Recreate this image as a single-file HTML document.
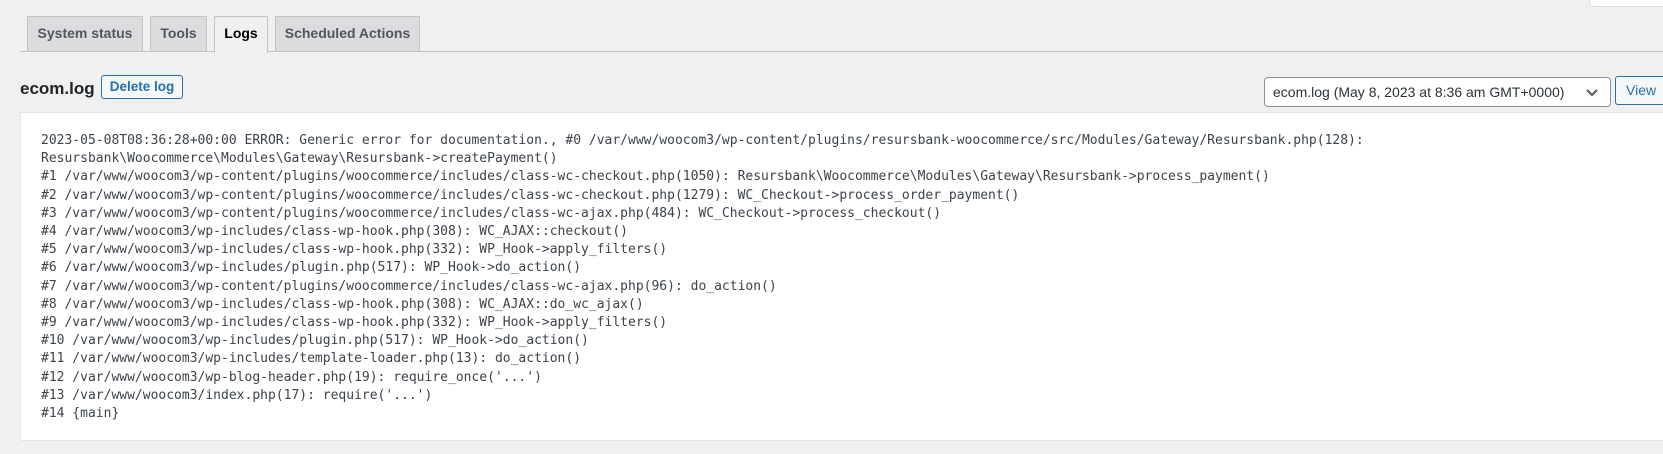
<!DOCTYPE html>
<html><head><meta charset="utf-8"><style>
body{margin:0;width:1663px;height:454px;background:#f0f0f1;font-family:"Liberation Sans",sans-serif;position:relative;overflow:hidden;color:#1d2327}
.tabs{position:absolute;left:20px;top:0;right:0;height:51px;border-bottom:1px solid #c3c4c7}
.tab{position:absolute;top:16px;height:35px;box-sizing:border-box;border:1px solid #c3c4c7;border-bottom:none;background:#dcdcde;color:#50575e;font-weight:bold;font-size:14px;line-height:33px;text-align:center}
.tab.active{background:#f0f0f1;color:#000;height:37px}
h2{position:absolute;left:20px;top:78px;margin:0;font-size:17px;font-weight:bold;line-height:22px}
.btn{position:absolute;box-sizing:border-box;border:1px solid #2271b1;color:#2271b1;background:#f6f7f7;border-radius:3px;font-size:13.5px;font-weight:bold;text-align:center}
.sel{position:absolute;left:1264px;top:77px;width:347px;height:30px;box-sizing:border-box;border:1px solid #8c8f94;border-radius:4px;background:#fff;font-size:14px;line-height:28px;padding-left:8px;color:#2c3338;white-space:nowrap}
.panel{position:absolute;left:20px;top:112px;width:1700px;height:329px;background:#fff;border:1px solid #e2e4e7;box-sizing:border-box}
pre{margin:0;position:absolute;left:20px;top:19px;font-family:"DejaVu Sans Mono",monospace;font-size:13px;line-height:18.2px;color:#3c434a}
</style></head><body>
<div style="position:absolute;left:1589px;top:-20px;width:100px;height:25px;background:#fff;border:1px solid #dcdcde;border-radius:4px"></div>
<div class="tabs"></div>
<div class="tab" style="left:27px;width:116px">System status</div>
<div class="tab" style="left:150px;width:57px">Tools</div>
<div class="tab active" style="left:214px;width:54px">Logs</div>
<div class="tab" style="left:275px;width:145px">Scheduled Actions</div>
<h2>ecom.log</h2>
<div class="btn" style="left:101px;top:75px;width:82px;height:24px;line-height:22px">Delete log</div>
<div class="sel">ecom.log (May 8, 2023 at 8:36 am GMT+0000)<svg style="position:absolute;right:12px;top:11px" width="12" height="8" viewBox="0 0 12 8"><path d="M1 1l5 5 5-5" stroke="#50575e" stroke-width="2" fill="none"/></svg></div>
<div class="btn" style="left:1615px;top:76px;width:60px;height:29px;line-height:27px;font-weight:normal;font-size:14px;text-align:left;padding-left:10px">View</div>
<div class="panel"><pre>2023-05-08T08:36:28+00:00 ERROR: Generic error for documentation., #0 /var/www/woocom3/wp-content/plugins/resursbank-woocommerce/src/Modules/Gateway/Resursbank.php(128):
Resursbank\Woocommerce\Modules\Gateway\Resursbank-&gt;createPayment()
#1 /var/www/woocom3/wp-content/plugins/woocommerce/includes/class-wc-checkout.php(1050): Resursbank\Woocommerce\Modules\Gateway\Resursbank-&gt;process_payment()
#2 /var/www/woocom3/wp-content/plugins/woocommerce/includes/class-wc-checkout.php(1279): WC_Checkout-&gt;process_order_payment()
#3 /var/www/woocom3/wp-content/plugins/woocommerce/includes/class-wc-ajax.php(484): WC_Checkout-&gt;process_checkout()
#4 /var/www/woocom3/wp-includes/class-wp-hook.php(308): WC_AJAX::checkout()
#5 /var/www/woocom3/wp-includes/class-wp-hook.php(332): WP_Hook-&gt;apply_filters()
#6 /var/www/woocom3/wp-includes/plugin.php(517): WP_Hook-&gt;do_action()
#7 /var/www/woocom3/wp-content/plugins/woocommerce/includes/class-wc-ajax.php(96): do_action()
#8 /var/www/woocom3/wp-includes/class-wp-hook.php(308): WC_AJAX::do_wc_ajax()
#9 /var/www/woocom3/wp-includes/class-wp-hook.php(332): WP_Hook-&gt;apply_filters()
#10 /var/www/woocom3/wp-includes/plugin.php(517): WP_Hook-&gt;do_action()
#11 /var/www/woocom3/wp-includes/template-loader.php(13): do_action()
#12 /var/www/woocom3/wp-blog-header.php(19): require_once('...')
#13 /var/www/woocom3/index.php(17): require('...')
#14 {main}</pre></div>
</body></html>
